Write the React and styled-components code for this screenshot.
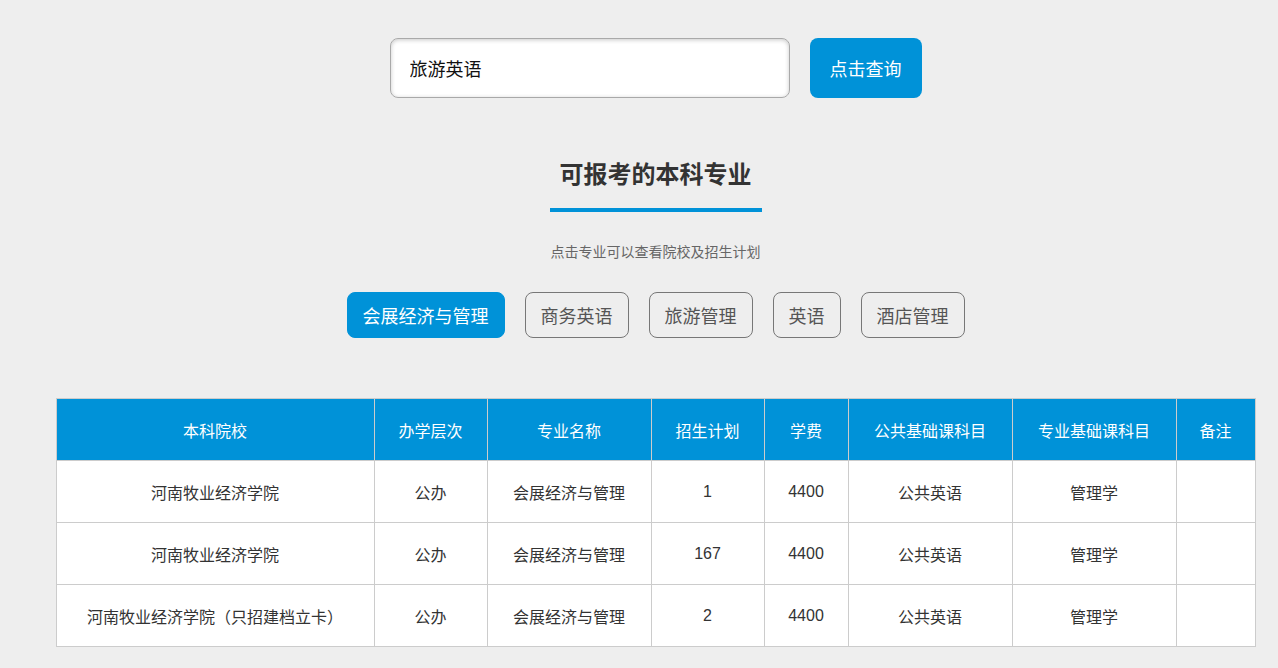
import styled, { createGlobalStyle } from "styled-components";

const GlobalStyle = createGlobalStyle`
  html, body {
    margin: 0;
    padding: 0;
    background: #eeeeee;
    font-family: "Liberation Sans", "Noto Sans CJK SC", sans-serif;
  }
`;

const majors = ["会展经济与管理", "商务英语", "旅游管理", "英语", "酒店管理"];

const columns = [
  { title: "本科院校", width: 318 },
  { title: "办学层次", width: 113 },
  { title: "专业名称", width: 164 },
  { title: "招生计划", width: 113 },
  { title: "学费", width: 84 },
  { title: "公共基础课科目", width: 164 },
  { title: "专业基础课科目", width: 164 },
  { title: "备注", width: 79 },
];

const rows = [
  ["河南牧业经济学院", "公办", "会展经济与管理", "1", "4400", "公共英语", "管理学", ""],
  ["河南牧业经济学院", "公办", "会展经济与管理", "167", "4400", "公共英语", "管理学", ""],
  ["河南牧业经济学院（只招建档立卡）", "公办", "会展经济与管理", "2", "4400", "公共英语", "管理学", ""],
];

export default function App() {
  return (
    <>
      <GlobalStyle />
      <Page>
        <SearchRow>
          <SearchInput defaultValue="旅游英语" />
          <SearchButton>点击查询</SearchButton>
        </SearchRow>
        <Title>可报考的本科专业</Title>
        <TitleLine />
        <Hint>点击专业可以查看院校及招生计划</Hint>
        <ChipRow>
          {majors.map((m, i) => (
            <Chip key={m} active={i === 0}>
              {m}
            </Chip>
          ))}
        </ChipRow>
        <Table>
          <colgroup>
            {columns.map((c) => (
              <col key={c.title} style={{ width: c.width }} />
            ))}
          </colgroup>
          <thead>
            <tr>
              {columns.map((c) => (
                <Th key={c.title}>{c.title}</Th>
              ))}
            </tr>
          </thead>
          <tbody>
            {rows.map((r, i) => (
              <tr key={i}>
                {r.map((v, j) => (
                  <Td key={j}>{v}</Td>
                ))}
              </tr>
            ))}
          </tbody>
        </Table>
      </Page>
    </>
  );
}

const Page = styled.div`
  width: 1199px;
  margin-left: 56px;
  padding-top: 38px;
  display: flex;
  flex-direction: column;
  align-items: center;
`;
const SearchRow = styled.div`
  display: flex;
  gap: 20px;
  height: 60px;
`;
const SearchInput = styled.input`
  width: 400px;
  height: 60px;
  box-sizing: border-box;
  border: 1px solid #a9a9a9;
  border-radius: 8px;
  box-shadow: inset 0 1px 4px rgba(0, 0, 0, 0.22);
  padding: 0 19px;
  font-family: "Liberation Sans", "Noto Sans CJK SC", sans-serif;
  font-size: 18px;
  color: #111;
  background: #fff;
  outline: none;
`;
const SearchButton = styled.button`
  width: 112px;
  height: 60px;
  border: none;
  border-radius: 8px;
  background: #0092d8;
  color: #fff;
  font-family: "Liberation Sans", "Noto Sans CJK SC", sans-serif;
  font-size: 18px;
  cursor: pointer;
`;
const Title = styled.h2`
  margin: 65px 0 0;
  font-size: 24px;
  line-height: 24px;
  font-weight: 700;
  color: #333;
`;
const TitleLine = styled.div`
  width: 212px;
  height: 4px;
  margin-top: 21px;
  background: #0092d8;
`;
const Hint = styled.p`
  margin: 32px 0 0;
  font-size: 14px;
  line-height: 17px;
  color: #666;
`;
const ChipRow = styled.div`
  display: flex;
  gap: 20px;
  margin-top: 31px;
`;
const Chip = styled.button`
  height: 46px;
  padding: 0 15px;
  border-radius: 8px;
  border: 1px solid ${(p) => (p.active ? "#0092d8" : "#777")};
  background: ${(p) => (p.active ? "#0092d8" : "transparent")};
  color: ${(p) => (p.active ? "#fff" : "#555")};
  font-family: "Liberation Sans", "Noto Sans CJK SC", sans-serif;
  font-size: 18px;
  cursor: pointer;
`;
const Table = styled.table`
  margin-top: 60px;
  width: 1199px;
  table-layout: fixed;
  border-collapse: collapse;
  background: #fff;
  border: 1px solid #cccccc;
`;
const Th = styled.th`
  height: 61px;
  padding: 0;
  background: #0092d8;
  color: #fff;
  font-weight: 400;
  font-size: 16px;
  border: 1px solid #cccccc;
  text-align: center;
`;
const Td = styled.td`
  height: 61px;
  padding: 0;
  color: #333;
  font-size: 16px;
  border: 1px solid #cccccc;
  text-align: center;
`;
